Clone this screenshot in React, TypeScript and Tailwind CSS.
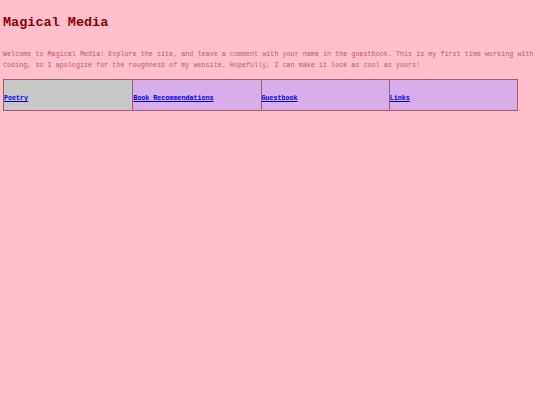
export default function App() {
  const links = [
    { label: 'Poetry', active: true },
    { label: 'Book Recommendations', active: false },
    { label: 'Guestbook', active: false },
    { label: 'Links', active: false },
  ]
  return (
    <div className="min-h-screen w-full bg-[#ffc0cb] px-[3px] pt-[13px] font-['Liberation_Mono','Courier_New',monospace]">
      <h1 className="text-[13.5px] leading-[20px] font-bold text-[#8b0000]">Magical Media</h1>
      <p className="mt-[16px] text-[6.75px] leading-[11px] text-[#c25a68]">
        Welcome to Magical Media! Explore the site, and leave a comment with your name in the guestbook. This is my first
        time working with coding, so I apologize for the roughness of my website. Hopefully, I can make it look as cool as
        yours!
      </p>
      <div className="mt-[8px] grid w-[515px] grid-cols-4 border border-[#a85868]">
        {links.map((l, i) => (
          <div
            key={l.label}
            className={`flex h-[30px] items-center pt-[6px] ${i > 0 ? 'border-l border-[#a85868]' : ''} ${
              l.active ? 'bg-[#c8c8c8]' : 'bg-[#d8aeea]'
            }`}
          >
            <a href="#" className="text-[6.7px] font-bold text-[#0000ee] underline">
              {l.label}
            </a>
          </div>
        ))}
      </div>
    </div>
  )
}
